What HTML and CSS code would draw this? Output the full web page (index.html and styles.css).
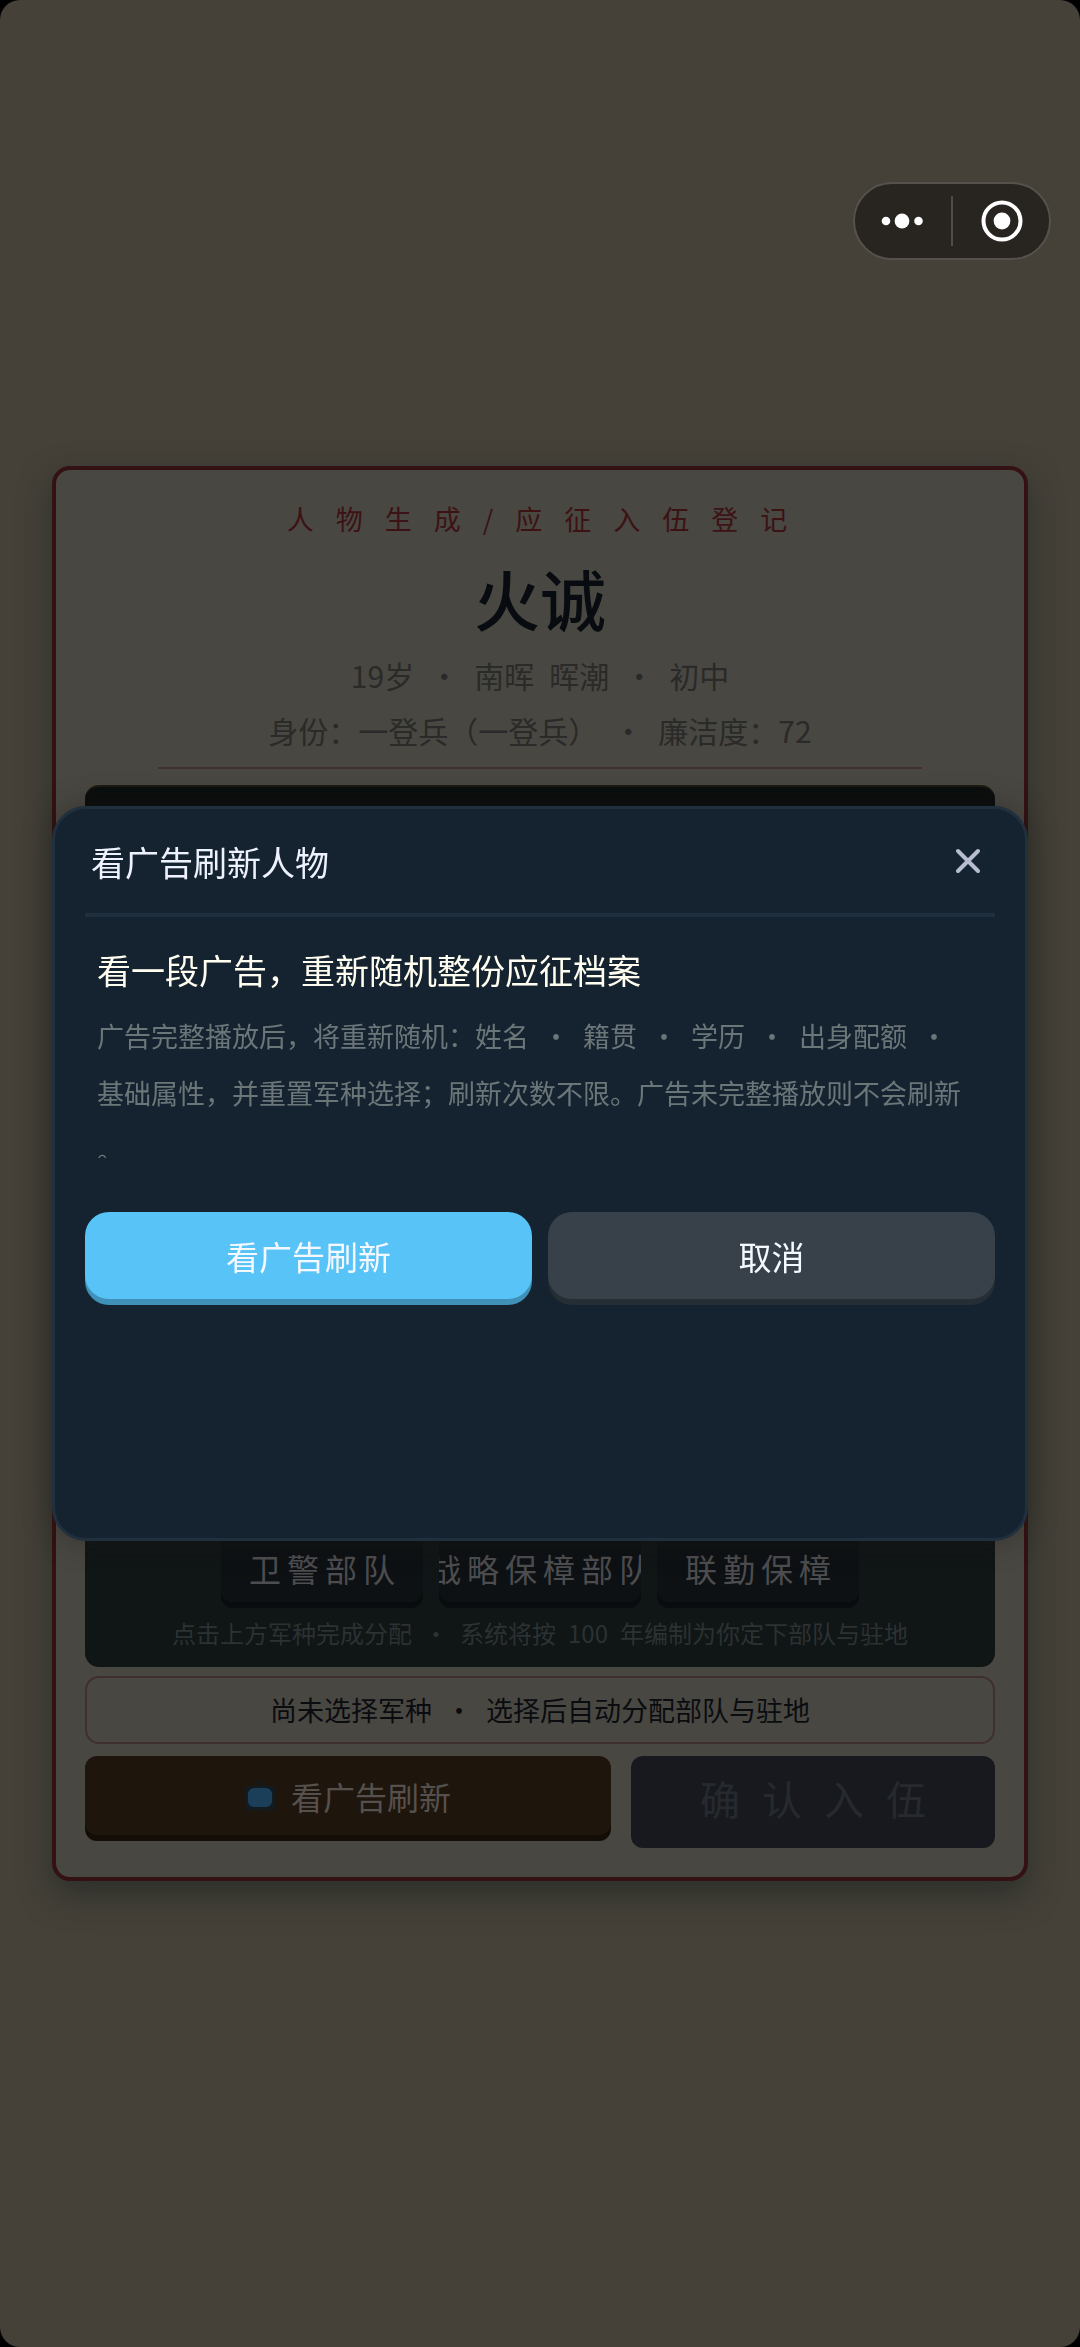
FILE: index.html
```html
<!DOCTYPE html>
<html lang="zh-CN">
<head>
  <meta charset="UTF-8">
  <meta name="viewport" content="width=device-width, initial-scale=1.0">
  <title>应征入伍登记</title>
  <link rel="stylesheet" href="styles.css">
</head>
<body>
  <div class="screen">
    <header class="topbar">
      <div class="capsule">
        <button type="button" class="capsule-btn" aria-label="更多">
          <svg width="44" height="44" viewBox="0 0 44 44" fill="#fff">
            <circle cx="5" cy="22" r="4.3"/>
            <circle cx="21" cy="22" r="7.4"/>
            <circle cx="37.5" cy="22" r="4.3"/>
          </svg>
        </button>
        <span class="capsule-line"></span>
        <button type="button" class="capsule-btn" aria-label="关闭小程序">
          <svg width="44" height="44" viewBox="0 0 44 44">
            <circle cx="23" cy="22" r="18.5" fill="none" stroke="#fff" stroke-width="4"/>
            <circle cx="23" cy="22" r="8.4" fill="#fff"/>
          </svg>
        </button>
      </div>
    </header>

    <main class="card">
      <p class="card-title">人物生成/应征入伍登记</p>
      <h1 class="name">火诚</h1>
      <p class="info">19岁<span class="dot">·</span>南晖&ensp;晖潮<span class="dot">·</span>初中</p>
      <p class="info">身份：一登兵（一登兵）<span class="dot">·</span>廉洁度：72</p>
      <hr class="card-line">

      <section class="stats"></section>

      <section class="branches">
        <div class="branch-list">
          <button type="button" class="branch"><span>卫警部队</span></button>
          <button type="button" class="branch"><span>战略保樟部队</span></button>
          <button type="button" class="branch"><span>联勤保樟</span></button>
        </div>
        <p class="branch-hint">点击上方军种完成分配<span class="dot">·</span>系统将按&ensp;100&ensp;年编制为你定下部队与驻地</p>
      </section>

      <p class="status">尚未选择军种<span class="dot">·</span>选择后自动分配部队与驻地</p>

      <div class="actions">
        <button type="button" class="btn-refresh">
          <svg class="tv" width="30" height="34" viewBox="0 0 30 34">
            <path d="M10 1l5 6 5-6" fill="none" stroke="#14181b" stroke-width="2"/>
            <rect x="0" y="7" width="30" height="24" rx="4" fill="#131a20"/>
            <path d="M4 30v3M26 30v3" stroke="#131a20" stroke-width="3"/>
            <rect x="3" y="9" width="24" height="19" rx="6" fill="#1b3f58"/>
          </svg>
          看广告刷新
        </button>
        <button type="button" class="btn-confirm" disabled>确认入伍</button>
      </div>
    </main>
  </div>

  <div class="overlay">
    <div class="modal" role="dialog" aria-labelledby="modalTitle">
      <div class="modal-header">
        <h2 class="modal-title" id="modalTitle">看广告刷新人物</h2>
        <button type="button" class="close" aria-label="关闭">
          <svg width="28" height="28" viewBox="0 0 28 28">
            <path d="M4 4l20 20M24 4L4 24" stroke="#b5bdce" stroke-width="4" stroke-linecap="round"/>
          </svg>
        </button>
      </div>
      <div class="modal-body">
        <h3 class="modal-lead">看一段广告，重新随机整份应征档案</h3>
        <p class="modal-text">广告完整播放后，将重新随机：姓名<span class="dot">·</span>籍贯<span class="dot">·</span>学历<span class="dot">·</span>出身配额<span class="dot">·</span>基础属性，并重置军种选择；刷新次数不限。广告未完整播放则不会刷新。</p>
      </div>
      <div class="modal-actions">
        <button type="button" class="btn btn-primary">看广告刷新</button>
        <button type="button" class="btn btn-cancel">取消</button>
      </div>
    </div>
  </div>
</body>
</html>
```

FILE: styles.css
```css
* {
  box-sizing: border-box;
}

body {
  margin: 0;
  background-color: #000;
  font-family: "Noto Sans CJK SC", sans-serif;
}

h1,
h2,
h3,
p {
  margin: 0;
  font-weight: 400;
}

button {
  border: none;
  padding: 0;
  font-family: inherit;
  cursor: pointer;
}

.screen {
  min-height: 100vh;
  background-color: #454139;
  border-radius: 20px;
}

/* separator between two pieces of text */
.dot {
  display: inline-block;
  width: 2em;
  text-align: center;
}

/* mini program capsule */
.topbar {
  display: flex;
  justify-content: flex-end;
  padding: 182px 29px 0;
}

.capsule {
  display: flex;
  align-items: center;
  width: 198px;
  height: 78px;
  border: 2px solid #55524d;
  border-radius: 39px;
  background-color: #282521;
}

.capsule-btn {
  display: flex;
  flex: 1;
  justify-content: center;
  background: none;
}

.capsule-line {
  width: 2px;
  height: 50px;
  background-color: #4f4c48;
}

/* character card */
.card {
  margin: 206px 52px 0;
  padding: 24px 29px 29px;
  border: 4px solid #341113;
  border-radius: 18px;
  background-color: #494742;
  box-shadow: 0 14px 32px rgba(20, 30, 28, 0.5);
  text-align: center;
}

.card-title {
  color: #3c1214;
  font-size: 27px;
  line-height: 50px;
  letter-spacing: 22px;
  text-indent: 16px;
}

.name {
  margin: 13px 0 11px;
  color: #080c11;
  font-size: 66px;
  font-weight: 500;
  line-height: 80px;
}

.info {
  color: #2a2a28;
  font-size: 30px;
  line-height: 55px;
}

.card-line {
  width: 84%;
  height: 2px;
  margin: 9px auto 16px;
  border: none;
  background-color: #40302d;
}

.stats {
  height: 300px;
  border-top: 2px solid #1d1a10;
  border-radius: 14px;
  background-color: #0a0d0e;
}

.branches {
  display: flex;
  flex-direction: column;
  justify-content: flex-end;
  min-height: 572px;
  margin-top: 10px;
  padding-bottom: 19px;
  border-radius: 14px;
  background-color: #101516;
}

.branch-list {
  display: flex;
  justify-content: center;
  gap: 16px;
}

.branch {
  display: flex;
  justify-content: center;
  align-items: center;
  width: 202px;
  height: 68px;
  overflow: hidden;
  border-radius: 12px;
  background-color: #0d1114;
  box-shadow: 0 6px 0 #090c0e;
  color: #4d4d50;
  font-size: 32px;
  letter-spacing: 6px;
  text-indent: 6px;
  white-space: nowrap;
}

.branch-hint {
  margin-top: 16px;
  color: #2c3132;
  font-size: 24px;
  line-height: 30px;
}

.status {
  margin: 9px 0 12px;
  border: 2px solid #40302d;
  border-radius: 14px;
  color: #0a0c0f;
  font-size: 27px;
  line-height: 64px;
}

.actions {
  display: flex;
  align-items: flex-start;
  gap: 20px;
}

.btn-refresh {
  display: flex;
  flex: 526;
  justify-content: center;
  align-items: center;
  gap: 16px;
  height: 79px;
  border-radius: 12px;
  background-color: #1e150c;
  box-shadow: 0 6px 0 #140d07;
  color: #55504d;
  font-size: 32px;
}

.btn-confirm {
  flex: 364;
  height: 92px;
  padding-bottom: 8px;
  border-radius: 12px;
  background-color: #17191e;
  color: #26292e;
  font-size: 40px;
  letter-spacing: 22px;
  text-indent: 22px;
}

/* ad dialog */
.overlay {
  position: fixed;
  inset: 0;
  display: flex;
  align-items: center;
  padding: 0 52px;
}

.modal {
  flex: 1;
  min-height: 735px;
  padding: 0 30px;
  border: 3px solid #20303e;
  border-radius: 34px;
  background-color: #152330;
  box-shadow: 0 0 30px rgba(30, 25, 18, 0.4);
}

.modal-header {
  display: flex;
  justify-content: space-between;
  align-items: center;
  height: 108px;
  padding-left: 6px;
  border-bottom: 4px solid #1f2f3d;
}

.modal-title {
  color: #eef2ff;
  font-size: 34px;
}

.close {
  display: flex;
  justify-content: center;
  width: 54px;
  background: none;
}

.modal-body {
  padding: 24px 28px 0 12px;
}

.modal-lead {
  margin-bottom: 9px;
  color: #fffef0;
  font-size: 34px;
  line-height: 57px;
}

.modal-text {
  height: 151px;
  overflow: hidden;
  color: #6b7678;
  font-size: 27px;
  line-height: 57px;
  line-break: anywhere;
}

.modal-actions {
  display: flex;
  gap: 16px;
  margin-top: 54px;
}

.btn {
  flex: 1;
  height: 87px;
  border-radius: 24px;
  color: #f4f8ff;
  font-size: 33px;
}

.btn-primary {
  background-color: #58c3f7;
  box-shadow: 0 6px 0 #4091b8;
}

.btn-cancel {
  background-color: #384149;
  box-shadow: 0 6px 0 #262e35;
}
```
